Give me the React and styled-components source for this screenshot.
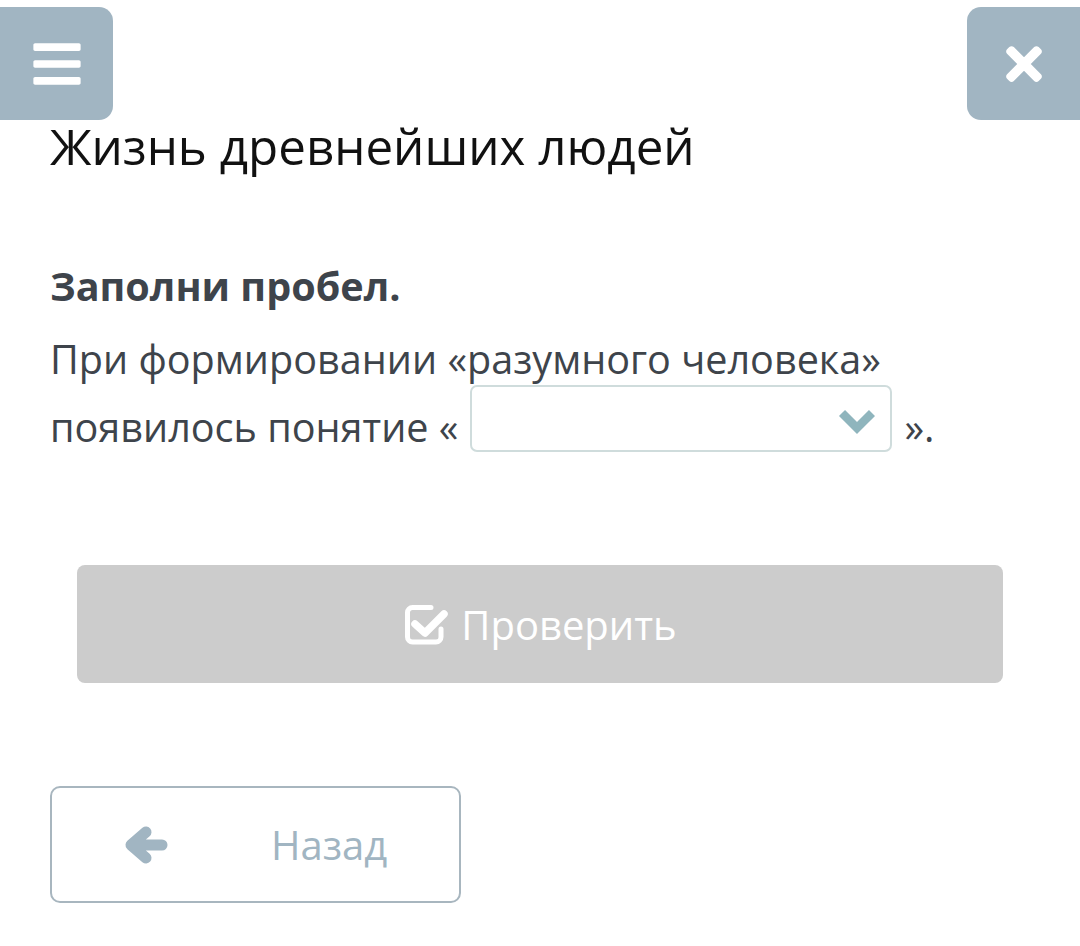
import styled, { createGlobalStyle } from "styled-components";
import { FaBars, FaTimes } from "react-icons/fa";

const GlobalStyle = createGlobalStyle`
  body {
    margin: 0;
    background: #fff;
    font-family: "Open Sans", "Noto Sans", sans-serif;
  }
`;

const Page = styled.div`
  width: 1080px;
  display: flex;
  flex-direction: column;
`;

const TopBar = styled.div`
  display: flex;
  justify-content: space-between;
  padding-top: 7px;
`;

const SideButton = styled.button`
  width: 113px;
  height: 113px;
  border: none;
  background: #a1b5c2;
  color: #fff;
  display: flex;
  align-items: center;
  justify-content: center;
  border-radius: ${(p) => (p.$side === "left" ? "0 14px 14px 0" : "14px 0 0 14px")};
  font-size: ${(p) => p.$icon}px;
  padding: 0;
`;

const Content = styled.div`
  padding: 0 50px;
  display: flex;
  flex-direction: column;
`;

const Title = styled.h1`
  margin: 0;
  font-size: 49.3px;
  font-weight: 400;
  color: #111;
  line-height: 52px;
`;

const Task = styled.h2`
  margin: 90px 0 0;
  font-size: 39.6px;
  font-weight: 700;
  color: #3e444b;
  line-height: 48px;
`;

const Sentence = styled.p`
  margin: 23px 0 0;
  font-size: 39.6px;
  color: #3e444b;
  line-height: 52px;
`;

const Select = styled.span`
  display: inline-block;
  overflow: hidden;
  box-sizing: border-box;
  width: 422px;
  height: 67px;
  vertical-align: -10px;
  border: 2px solid #cfdcdc;
  border-radius: 7px;
  margin: 0 12px;
  padding-right: 14px;
  text-align: right;
  line-height: 63px;

  svg {
    vertical-align: middle;
  }
`;

const CheckButton = styled.button`
  margin: 112px 27px 0;
  height: 118px;
  border: none;
  border-radius: 8px;
  background: #cccccc;
  color: #fff;
  font-family: inherit;
  font-size: 40px;
  display: flex;
  align-items: center;
  justify-content: center;
  gap: 12px;
`;

const BackButton = styled.button`
  margin-top: 103px;
  width: 411px;
  height: 117px;
  box-sizing: border-box;
  border: 2px solid #a8b6bf;
  border-radius: 10px;
  background: #fff;
  color: #a1b5c2;
  font-family: inherit;
  font-size: 40px;
  display: flex;
  align-items: center;
  padding: 0 0 0 71px;
  gap: 102px;
`;

const Chevron = () => (
  <svg width="38" height="26" viewBox="0 0 38 26">
    <polyline points="4,4 19,19 34,4" fill="none" stroke="#8fb5bd" strokeWidth="8.5" />
  </svg>
);

const CheckSquare = () => (
  <svg width="46" height="42" viewBox="0 0 46 42">
    <path
      d="M28 4.5H9.5a5 5 0 0 0-5 5V34a5 5 0 0 0 5 5H33a5 5 0 0 0 5-5v-8"
      fill="none"
      stroke="#fff"
      strokeWidth="5"
      strokeLinecap="round"
    />
    <path
      d="M12 21L22 30L41 11"
      fill="none"
      stroke="#fff"
      strokeWidth="7.5"
      strokeLinecap="round"
      strokeLinejoin="round"
    />
  </svg>
);

const ArrowLeft = () => (
  <svg width="46" height="42" viewBox="0 0 46 42">
    <path
      d="M23 8L8 21L23 34M10 21H39"
      fill="none"
      stroke="#a1b5c2"
      strokeWidth="11"
      strokeLinecap="round"
      strokeLinejoin="round"
    />
  </svg>
);

export default function App() {
  return (
    <Page>
      <GlobalStyle />
      <TopBar>
        <SideButton $side="left" $icon={54}>
          <FaBars />
        </SideButton>
        <SideButton $side="right" $icon={52}>
          <FaTimes />
        </SideButton>
      </TopBar>
      <Content>
        <Title>Жизнь древнейших людей</Title>
        <Task>Заполни пробел.</Task>
        <Sentence>
          При формировании «разумного человека» появилось понятие «
          <Select>
            <Chevron />
          </Select>
          ».
        </Sentence>
        <CheckButton>
          <CheckSquare />
          Проверить
        </CheckButton>
        <BackButton>
          <ArrowLeft />
          Назад
        </BackButton>
      </Content>
    </Page>
  );
}
